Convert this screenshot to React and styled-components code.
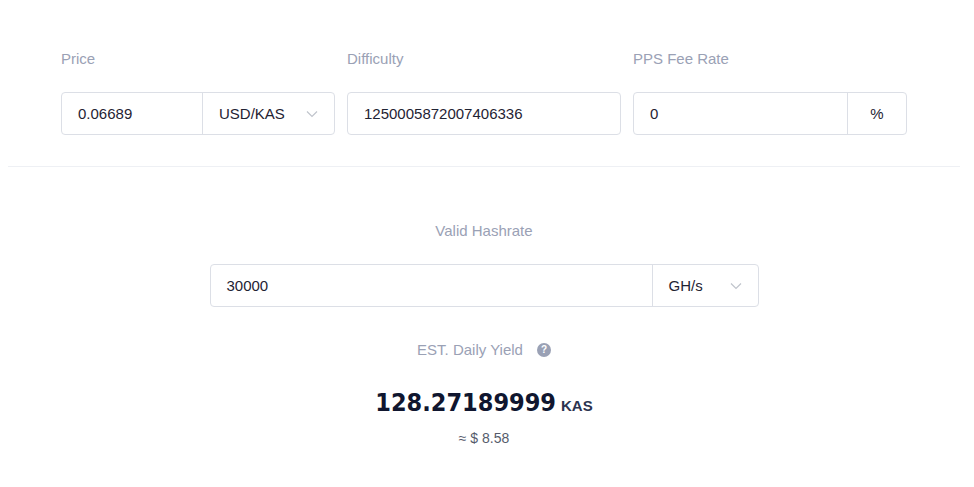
import React from "react";
import styled, { createGlobalStyle } from "styled-components";

const G = createGlobalStyle`
  body { margin: 0; background: #fff; font-family: "Liberation Sans", Arial, sans-serif; }
`;
const Page = styled.div`padding: 0 14px 0 8px;`;
const Top = styled.div`
  display: grid; grid-template-columns: 274px 274px 274px; column-gap: 12px;
  padding: 50px 0 31px 53px; border-bottom: 1px solid #eef0f4;
`;
const Label = styled.div`color: #9aa1b5; font-size: 15px; line-height: 17px; margin-bottom: 25px;`;
const Group = styled.div`
  display: flex; height: 43px; border: 1px solid #dcdfe6; border-radius: 4px; box-sizing: border-box;
  width: ${p => p.w || "100%"};
`;
const Value = styled.div`
  flex: 1; display: flex; align-items: center; padding-left: 16px; font-size: 15px; color: #1f2333;
`;
const Addon = styled.div`
  width: ${p => p.w}px; border-left: 1px solid #dcdfe6; display: flex; align-items: center;
  justify-content: ${p => (p.center ? "center" : "space-between")};
  padding: ${p => (p.center ? "0" : "0 16px")}; box-sizing: border-box; font-size: 15px; color: #1f2333;
`;
const Chev = () => (
  <svg width="12" height="8" viewBox="0 0 12 8"><path d="M1 1.5l5 5 5-5" fill="none" stroke="#c0c4cc" strokeWidth="1.2"/></svg>
);
const Center = styled.div`display: flex; flex-direction: column; align-items: center; padding-top: 55px;`;
const Yield = styled.div`
  display: flex; align-items: center; gap: 14px; color: #9aa1b5; font-size: 15px; margin-top: 34px;
`;
const Q = styled.span`
  width: 14px; height: 14px; border-radius: 50%; background: #9aa1b5; color: #fff; font-size: 10px;
  font-weight: bold; display: inline-flex; align-items: center; justify-content: center;
`;
const Big = styled.div`
  margin-top: 30px; font-family: "Liberation Sans Narrow", "DejaVu Sans Condensed", sans-serif; font-weight: bold;
  font-size: 25px; color: #10162f; display: flex; align-items: baseline; gap: 5px;
`;
const Unit = styled.span`font-family: "Liberation Sans", sans-serif; font-size: 15px; color: #2c3450;`;
const Approx = styled.div`margin-top: 13px; font-size: 14px; color: #555b6b;`;

export default function App() {
  return (
    <Page>
      <G />
      <Top>
        <div><Label>Price</Label>
          <Group><Value>0.06689</Value><Addon w={132}>USD/KAS<Chev /></Addon></Group></div>
        <div><Label>Difficulty</Label>
          <Group><Value>1250005872007406336</Value></Group></div>
        <div><Label>PPS Fee Rate</Label>
          <Group><Value>0</Value><Addon w={59} center>%</Addon></Group></div>
      </Top>
      <Center>
        <Label>Valid Hashrate</Label>
        <Group w="549px"><Value>30000</Value><Addon w={106}>GH/s<Chev /></Addon></Group>
        <Yield>EST. Daily Yield<Q>?</Q></Yield>
        <Big>128.27189999<Unit>KAS</Unit></Big>
        <Approx>≈ $ 8.58</Approx>
      </Center>
    </Page>
  );
}
